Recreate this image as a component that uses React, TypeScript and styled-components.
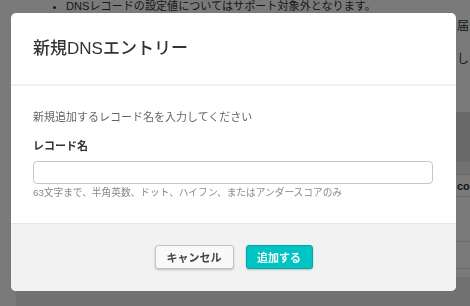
import React from 'react';
import styled, { createGlobalStyle } from 'styled-components';

const FONT = `'Liberation Sans', 'Noto Sans CJK JP', sans-serif`;

const GlobalStyle = createGlobalStyle`
  html, body {
    margin: 0;
    padding: 0;
  }
  body {
    width: 470px;
    height: 306px;
    overflow: hidden;
    background: #ffffff;
    font-family: ${FONT};
    color: #333;
  }
`;

/* ---------- page behind the dialog ---------- */

const Page = styled.div`
  width: 470px;
  height: 306px;
  overflow: hidden;
  display: flex;
  flex-direction: column;
`;

const NoticeList = styled.ul`
  margin: -2px 0 0 0;
  padding: 0 0 0 66px;
  font-size: 11.1px;
  line-height: 16px;
  color: #333;
  white-space: nowrap;
`;

const BgLine = styled.div<{ $indent: number; $top: number }>`
  margin-top: ${(p) => p.$top}px;
  padding-left: ${(p) => p.$indent}px;
  font-size: 12px;
  line-height: 16px;
  white-space: nowrap;
  color: #333;
`;

const TableArea = styled.div`
  margin-top: 45px;
  margin-left: 16px;
  display: flex;
  flex-direction: column;
`;

const TableHead = styled.div`
  height: 50px;
  background: #dcdcdc;
`;

const TableSub = styled.div`
  height: 12px;
  background: #eeeeee;
  border-bottom: 1px solid #d6d6d6;
`;

const TableRow = styled.div<{ $h: number }>`
  height: ${(p) => p.$h}px;
  border-bottom: 1px solid #e2e2e2;
  display: flex;
  align-items: center;
  padding-left: 441px;
  font-size: 11px;
  font-weight: 700;
  white-space: nowrap;
  color: #333;
`;

const BottomPanel = styled.div`
  margin-top: 8px;
  margin-left: 16px;
  height: 30px;
  background: #ececec;
  border-top-left-radius: 6px;
`;

/* ---------- overlay + dialog ---------- */

const Overlay = styled.div`
  position: fixed;
  inset: 0;
  background: rgba(0, 0, 0, 0.52);
`;

const Dialog = styled.div`
  position: fixed;
  left: 11px;
  top: 13px;
  width: 445px;
  height: 278px;
  background: #ffffff;
  border-radius: 5px;
  overflow: hidden;
  display: flex;
  flex-direction: column;
`;

const Header = styled.div`
  padding: 24px 22px 23px;
  border-bottom: 2px solid #f1f1f1;
`;

const Title = styled.h2`
  margin: 0;
  font-size: 17px;
  line-height: 24px;
  font-weight: 500;
  color: #333;
`;

const Body = styled.div`
  padding: 23px 22px 0;
  flex: 1;
  display: flex;
  flex-direction: column;
`;

const Lead = styled.p`
  margin: 0;
  font-size: 11px;
  line-height: 16px;
  color: #666;
`;

const Label = styled.label`
  margin-top: 13px;
  font-size: 11px;
  line-height: 16px;
  font-weight: 700;
  color: #333;
`;

const Input = styled.input`
  margin-top: 7px;
  box-sizing: border-box;
  width: 400px;
  height: 23px;
  border: 1px solid #c6c6c6;
  border-radius: 4px;
  background: #fff;
  padding: 0 6px;
  font-family: ${FONT};
  font-size: 11px;
  outline: none;
`;

const Hint = styled.div`
  margin-top: 2px;
  font-size: 9.7px;
  line-height: 14px;
  color: #888;
`;

const Footer = styled.div`
  height: 68px;
  box-sizing: border-box;
  background: #f2f2f2;
  border-top: 1px solid #e6e6e6;
  display: flex;
  justify-content: center;
  align-items: center;
  gap: 12px;
  padding-bottom: 1px;
`;

const Button = styled.button<{ $primary?: boolean }>`
  height: 24px;
  box-sizing: border-box;
  padding: 0 ${(p) => (p.$primary ? 10.5 : 11)}px;
  border-radius: 3px;
  font-family: ${FONT};
  font-size: 11px;
  font-weight: 700;
  cursor: pointer;
  border: 1px solid ${(p) => (p.$primary ? '#00a8a8' : '#c4c4c4')};
  background: ${(p) => (p.$primary ? '#00c3c3' : '#f9f9f9')};
  color: ${(p) => (p.$primary ? '#ffffff' : '#444444')};
  box-shadow: 0 1px 2px rgba(0, 0, 0, 0.22);
`;

export default function App() {
  return (
    <>
      <GlobalStyle />
      <Page>
        <NoticeList>
          <li>DNSレコードの設定値についてはサポート対象外となります。</li>
        </NoticeList>
        <BgLine $indent={457} $top={4}>
          届か
        </BgLine>
        <BgLine $indent={457} $top={17}>
          しか
        </BgLine>
        <TableArea>
          <TableHead />
          <TableSub />
          <TableRow $h={21}>co</TableRow>
          <TableRow $h={44} />
          <TableRow $h={26} />
        </TableArea>
        <BottomPanel />
      </Page>
      <Overlay />
      <Dialog role="dialog">
        <Header>
          <Title>新規DNSエントリー</Title>
        </Header>
        <Body>
          <Lead>新規追加するレコード名を入力してください</Lead>
          <Label>レコード名</Label>
          <Input type="text" />
          <Hint>63文字まで、半角英数、ドット、ハイフン、またはアンダースコアのみ</Hint>
        </Body>
        <Footer>
          <Button>キャンセル</Button>
          <Button $primary>追加する</Button>
        </Footer>
      </Dialog>
    </>
  );
}
